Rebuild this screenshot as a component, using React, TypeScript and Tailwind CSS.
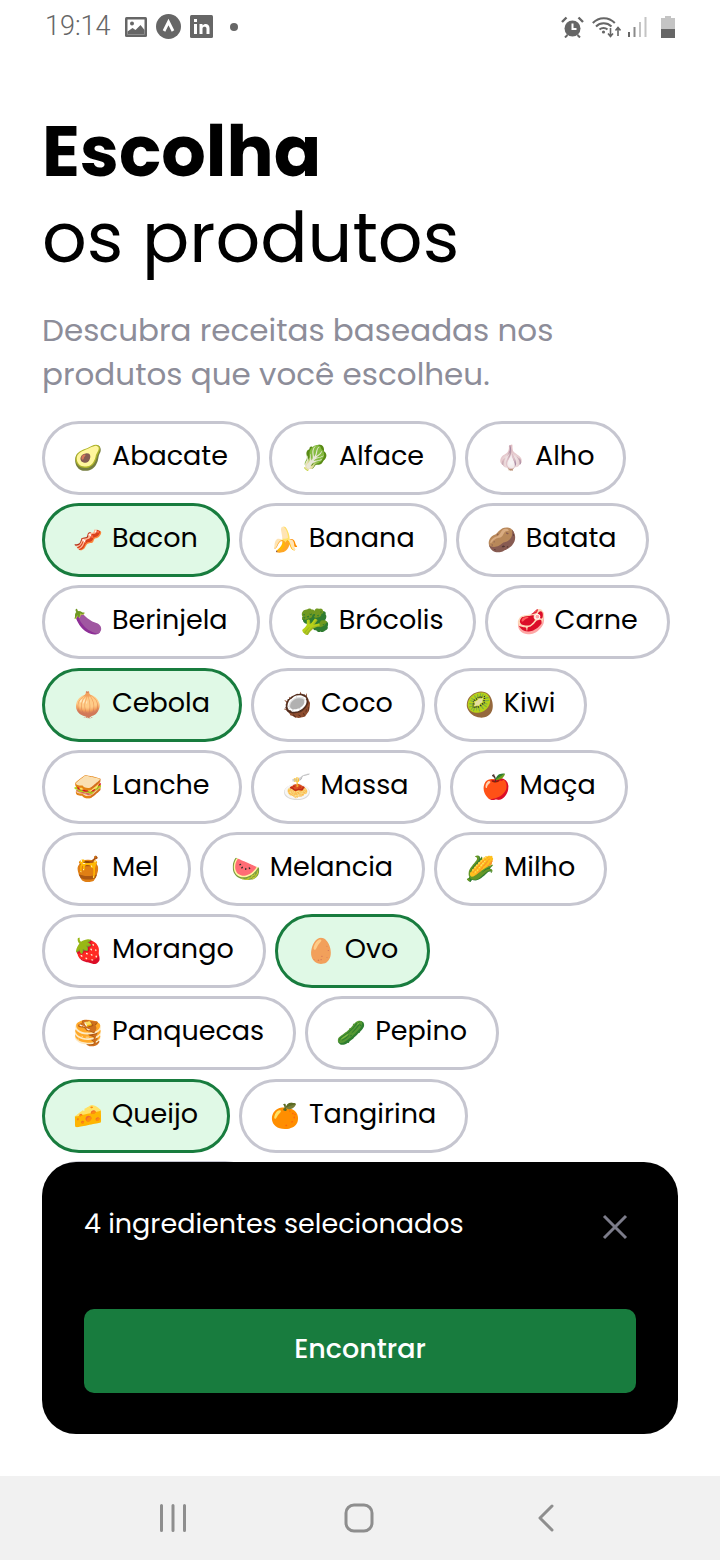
const items: [string, string, boolean?][] = [
  ["🥑", "Abacate"], ["🥬", "Alface"], ["🧄", "Alho"],
  ["🥓", "Bacon", true], ["🍌", "Banana"], ["🥔", "Batata"],
  ["🍆", "Berinjela"], ["🥦", "Brócolis"], ["🥩", "Carne"],
  ["🧅", "Cebola", true], ["🥥", "Coco"], ["🥝", "Kiwi"],
  ["🥪", "Lanche"], ["🍝", "Massa"], ["🍎", "Maça"],
  ["🍯", "Mel"], ["🍉", "Melancia"], ["🌽", "Milho"],
  ["🍓", "Morango"], ["🥚", "Ovo", true],
  ["🥞", "Panquecas"], ["🥒", "Pepino"],
  ["🧀", "Queijo", true], ["🍊", "Tangirina"],
];

function StatusBar() {
  return (
    <div className="flex h-[53px] shrink-0 items-center justify-between pl-[45px] pr-[45px] text-[#666666]">
      <div className="flex items-center">
        <span className="font-['Roboto',sans-serif] text-[27px] font-light leading-none">19:14</span>
        <svg className="ml-[14px]" width="22" height="20" viewBox="0 0 22 20">
          <rect x="0" y="0" width="22" height="20" rx="1.500" fill="#666" />
          <rect x="2.500" y="2.500" width="17" height="15" fill="#fff" />
          <circle cx="7" cy="6.500" r="2" fill="#666" />
          <path d="M2.500 17.500v-3l5-3.500 3 2 5-5 4 5v4.500z" fill="#666" />
        </svg>
        <svg className="ml-[9px]" width="25" height="25" viewBox="0 0 25 25">
          <circle cx="12.500" cy="12.500" r="12.500" fill="#666" />
          <path d="M8 17l4.500-9 4.500 9" fill="none" stroke="#fff" strokeWidth="2.800" />
        </svg>
        <svg className="ml-[9px]" width="23" height="23" viewBox="0 0 23 23">
          <rect width="23" height="23" rx="1.500" fill="#666" />
          <rect x="4" y="9" width="3" height="10" fill="#fff" />
          <rect x="4" y="4" width="3" height="3" fill="#fff" />
          <path d="M9.500 9h3v1.500c1.500-2.200 7-2.500 7 2.500v6h-3v-5.500c0-2.500-4-2.500-4 0V19h-3z" fill="#fff" />
        </svg>
        <span className="ml-[17px] h-[8px] w-[8px] rounded-full bg-[#666666]" />
      </div>
      <div className="flex items-center">
        <svg width="23" height="22" viewBox="0 0 23 22">
          <path d="M1 6l4.500-4.500M22 6l-4.500-4.500" stroke="#666" strokeWidth="2.400" />
          <path d="M4 21.500l2.500-2.500M19 21.500L16.500 19" stroke="#666" strokeWidth="2" />
          <circle cx="11.500" cy="12.500" r="8" fill="#666" />
          <path d="M11.500 7.500v5.500h4" fill="none" stroke="#fff" strokeWidth="2" />
        </svg>
        <svg className="ml-[8px]" width="29" height="22" viewBox="0 0 29 22">
          <path d="M0.800 7c6-6.500 16-6.500 22 0M4 10.500c4.200-4.200 11-4.200 15.500 0M7.500 13.500c2.200-2 5.800-2 8 0" fill="none" stroke="#666" strokeWidth="2" />
          <circle cx="11.500" cy="16" r="1.600" fill="#666" />
          <path d="M18.500 12v8M16 17.500l2.500 3 2.500-3M26 20v-8M23.500 14.500l2.500-3 2.500 3" fill="none" stroke="#666" strokeWidth="1.600" />
        </svg>
        <svg className="ml-[7px]" width="19" height="20" viewBox="0 0 19 20">
          <rect x="0" y="15" width="2" height="5" fill="#666" />
          <rect x="5.500" y="10" width="2" height="10" fill="#8a8a8a" />
          <rect x="11" y="5" width="2" height="15" fill="#c4c4c4" />
          <rect x="16.500" y="0" width="2" height="20" fill="#c4c4c4" />
        </svg>
        <svg className="ml-[14px]" width="14" height="22" viewBox="0 0 14 22">
          <path d="M4 0h6v2h4v20H0V2h4z" fill="#c4c4c4" />
          <rect y="13" width="14" height="9" fill="#666" />
        </svg>
      </div>
    </div>
  );
}

function Chip({ emoji, label, on }: { emoji: string; label: string; on?: boolean }) {
  return (
    <div
      className={`flex h-[74px] items-center gap-[10px] rounded-full border-[3px] pl-[29px] pr-[29px] ${
        on ? "border-[#187c3e] bg-[#e0f9e6]" : "border-[#c6c6d0] bg-white"
      }`}
    >
      <span className="-ml-[1px] w-[29px] text-center text-[24px] leading-none">{emoji}</span>
      <span className="pb-[5px] text-[27px] leading-none text-black">{label}</span>
    </div>
  );
}

export default function App() {
  return (
    <div className="relative flex h-[1560px] w-[720px] flex-col overflow-hidden bg-white font-['Poppins',sans-serif]">
      <StatusBar />
      <main className="flex min-h-0 flex-1 flex-col px-[42px] pt-[56px]">
        <h1 className="text-[70px] font-bold leading-[86px] text-black">Escolha</h1>
        <p className="text-[70px] leading-[86px] text-black">os produtos</p>
        <p className="mt-[27px] w-[600px] text-[31px] leading-[44px] text-[#8d8d99]">
          Descubra receitas baseadas nos produtos que você escolheu.
        </p>
        <div className="mt-[25px] flex flex-wrap content-start gap-x-[9px] gap-y-[8.2px]">
          {items.map(([emoji, label, on]) => (
            <Chip key={label} emoji={emoji} label={label} on={on} />
          ))}
          <div className="h-[74px] w-[220px] rounded-full border-[3px] border-[#c6c6d0] bg-white" />
        </div>
      </main>
      <section className="absolute left-[42px] top-[1162px] h-[272px] w-[636px] rounded-[34px] bg-black px-[42px] pt-[42px]">
        <div className="flex items-start justify-between">
          <span className="text-[27px] leading-[40px] text-white">4 ingredientes selecionados</span>
          <svg className="mr-[8px] mt-[10px]" width="26" height="26" viewBox="0 0 26 26">
            <path d="M2 2l22 22M24 2L2 24" stroke="#7c7c8a" strokeWidth="3" />
          </svg>
        </div>
        <button className="mt-[65px] flex h-[84px] w-full items-center justify-center rounded-[10px] bg-[#187c3e] pb-[3px] text-[27px] font-medium text-white">
          Encontrar
        </button>
      </section>
      <nav className="relative z-10 flex h-[84px] shrink-0 items-center justify-between bg-[#f1f1f1] pl-[160px] pr-[165px]">
        <svg width="26" height="28" viewBox="0 0 26 28">
          <path d="M1.500 1.500v25M13 1.500v25M24.500 1.500v25" stroke="#8e8e8e" strokeWidth="3" strokeLinecap="round" />
        </svg>
        <svg className="mr-[6px]" width="30" height="30" viewBox="0 0 30 30">
          <rect x="2" y="2" width="26" height="26" rx="8" fill="none" stroke="#8e8e8e" strokeWidth="3" />
        </svg>
        <svg width="18" height="28" viewBox="0 0 18 28">
          <path d="M15 2L3 14l12 12" fill="none" stroke="#8e8e8e" strokeWidth="3" strokeLinecap="round" strokeLinejoin="round" />
        </svg>
      </nav>
    </div>
  );
}
